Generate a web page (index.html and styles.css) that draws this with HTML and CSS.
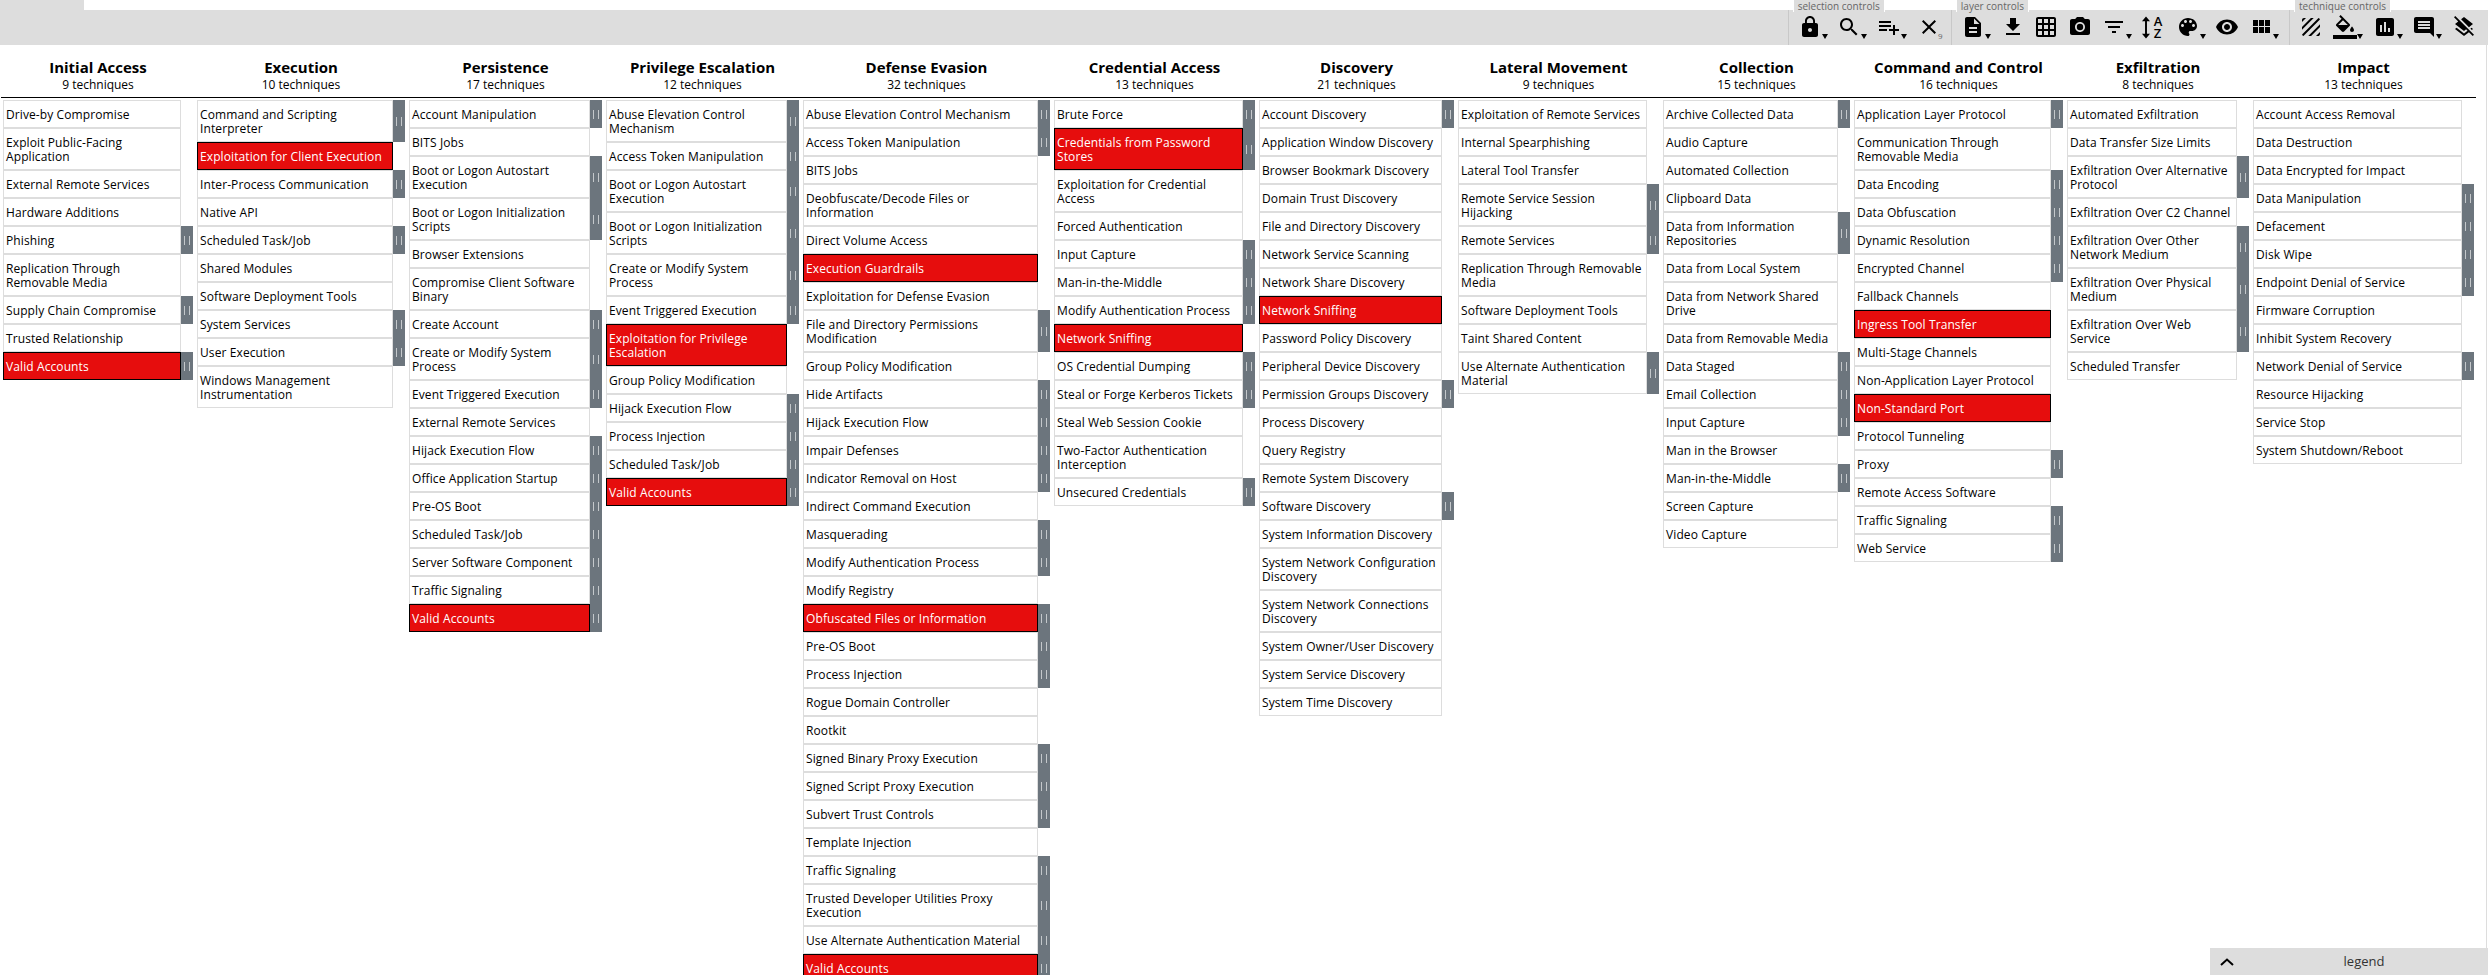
FILE: index.html
```html
<!DOCTYPE html>
<html lang="en">
<head>
<meta charset="utf-8">
<title>ATT&amp;CK Navigator</title>
<link rel="stylesheet" href="styles.css">
</head>
<body>
<header class="topbar">
  <div class="strip"><div class="strip-tab"></div></div>
  <div class="controls">
    <div class="group">
      <span class="group-label">selection controls</span>
      <div class="ctl dd"><svg viewBox="0 0 24 24"><path d="M18 8h-1V6c0-2.76-2.24-5-5-5S7 3.24 7 6v2H6c-1.1 0-2 .9-2 2v10c0 1.1.9 2 2 2h12c1.1 0 2-.9 2-2V10c0-1.1-.9-2-2-2zm-6 9c-1.1 0-2-.9-2-2s.9-2 2-2 2 .9 2 2-.9 2-2 2zm3.1-9H8.9V6c0-1.71 1.39-3.1 3.1-3.1 1.71 0 3.1 1.39 3.1 3.1v2z"/></svg></div>
      <div class="ctl dd"><svg viewBox="0 0 24 24"><path d="M15.5 14h-.79l-.28-.27C15.41 12.59 16 11.11 16 9.5 16 5.91 13.09 3 9.5 3S3 5.91 3 9.5 5.91 16 9.5 16c1.61 0 3.09-.59 4.23-1.57l.27.28v.79l5 4.99L20.49 19l-4.99-5zm-6 0C7.01 14 5 11.99 5 9.5S7.01 5 9.5 5 14 7.01 14 9.5 11.99 14 9.5 14z"/></svg></div>
      <div class="ctl dd"><svg viewBox="0 0 24 24"><path d="M14 10H2v2h12v-2zm0-4H2v2h12V6zm4 8v-4h-2v4h-4v2h4v4h2v-4h4v-2h-4zM2 16h8v-2H2v2z"/></svg></div>
      <div class="ctl"><svg viewBox="0 0 24 24"><path d="M19 6.41L17.59 5 12 10.59 6.41 5 5 6.41 10.59 12 5 17.59 6.41 19 12 13.41 17.59 19 19 17.59 13.41 12z"/></svg><span class="count">9</span></div>
    </div>
    <div class="group">
      <span class="group-label">layer controls</span>
      <div class="ctl dd"><svg viewBox="0 0 24 24"><path d="M14 2H6c-1.1 0-1.99.9-1.99 2L4 20c0 1.1.89 2 1.99 2H18c1.1 0 2-.9 2-2V8l-6-6zm2 16H8v-2h8v2zm0-4H8v-2h8v2zm-3-5V3.5L18.5 9H13z"/></svg></div>
      <div class="ctl"><svg viewBox="0 0 24 24"><path d="M19 9h-4V3H9v6H5l7 7 7-7zM5 18v2h14v-2H5z"/></svg></div>
      <div class="ctl"><svg viewBox="0 0 24 24"><path d="M20 2H4c-1.1 0-2 .9-2 2v16c0 1.1.9 2 2 2h16c1.1 0 2-.9 2-2V4c0-1.1-.9-2-2-2zM8 20H4v-4h4v4zm0-6H4v-4h4v4zm0-6H4V4h4v4zm6 12h-4v-4h4v4zm0-6h-4v-4h4v4zm0-6h-4V4h4v4zm6 12h-4v-4h4v4zm0-6h-4v-4h4v4zm0-6h-4V4h4v4z"/></svg></div>
      <div class="ctl"><svg viewBox="0 0 24 24"><circle cx="12" cy="12" r="3.2"/><path d="M9 2L7.17 4H4c-1.1 0-2 .9-2 2v12c0 1.1.9 2 2 2h16c1.1 0 2-.9 2-2V6c0-1.1-.9-2-2-2h-3.17L15 2H9zm3 15c-2.76 0-5-2.24-5-5s2.24-5 5-5 5 2.24 5 5-2.24 5-5 5z"/></svg></div>
      <div class="ctl dd"><svg viewBox="0 0 24 24"><path d="M10 18h4v-2h-4v2zM3 6v2h18V6H3zm3 7h12v-2H6v2z"/></svg></div>
      <div class="ctl sort"><svg class="sort-arrow" viewBox="0 0 10 24"><path d="M5 0.5L9.2 5.5H6V18.5H9.2L5 23.500L0.8 18.5H4V5.5H0.8z"/></svg><span class="az">A<br>Z</span></div>
      <div class="ctl dd"><svg viewBox="0 0 24 24"><path d="M12 3c-4.97 0-9 4.03-9 9s4.03 9 9 9c.83 0 1.5-.67 1.5-1.5 0-.39-.15-.74-.39-1.01-.23-.26-.38-.61-.38-.99 0-.83.67-1.5 1.5-1.5H16c2.76 0 5-2.24 5-5 0-4.42-4.03-8-9-8zm-5.500 9c-.83 0-1.5-.67-1.5-1.5S5.67 9 6.5 9 8 9.67 8 10.500 7.33 12 6.5 12zm3-4C8.67 8 8 7.33 8 6.5S8.67 5 9.5 5s1.5.67 1.5 1.5S10.33 8 9.5 8zm5 0c-.83 0-1.5-.67-1.5-1.5S13.67 5 14.5 5s1.5.67 1.5 1.5S15.33 8 14.5 8zm3 4c-.83 0-1.5-.67-1.5-1.5S16.67 9 17.5 9s1.5.67 1.5 1.5-.67 1.5-1.5 1.5z"/></svg></div>
      <div class="ctl"><svg viewBox="0 0 24 24"><path d="M12 4.5C7 4.5 2.730 7.610 1 12c1.730 4.390 6 7.500 11 7.500s9.270-3.110 11-7.500c-1.730-4.390-6-7.500-11-7.500zM12 17c-2.760 0-5-2.240-5-5s2.240-5 5-5 5 2.240 5 5-2.240 5-5 5zm0-8c-1.660 0-3 1.340-3 3s1.340 3 3 3 3-1.340 3-3-1.340-3-3-3z"/></svg></div>
      <div class="ctl dd"><svg viewBox="0 0 24 24"><path d="M4 11h5V5H4v6zm0 7h5v-6H4v6zm6 0h5v-6h-5v6zm6 0h5v-6h-5v6zm-6-7h5V5h-5v6zm6-6v6h5V5h-5z"/></svg></div>
    </div>
    <div class="group">
      <span class="group-label">technique controls</span>
      <div class="ctl"><svg viewBox="0 0 24 24"><path d="M19.51 3.080L3.080 19.510c.09.34.27.65.51.9.25.24.56.42.9.51L20.930 4.490c-.19-.69-.73-1.230-1.420-1.410zM11.880 3L3 11.880v2.830L14.710 3h-2.830zM5 3c-1.100 0-2 .9-2 2v2l4-4H5zm14 18c.55 0 1.050-.22 1.410-.59.37-.36.59-.86.59-1.410v-2l-4 4h2zm-9.710 0h2.830L21 12.120V9.290L9.290 21z"/></svg></div>
      <div class="ctl dd"><svg viewBox="0 0 24 24"><path d="M16.560 8.940L7.620 0 6.210 1.410l2.380 2.380-5.150 5.150c-.59.59-.59 1.540 0 2.120l5.500 5.500c.29.29.68.44 1.060.44s.77-.15 1.060-.44l5.500-5.500c.59-.58.59-1.530 0-2.120zM5.210 10L10 5.210 14.790 10H5.210zM19 11.500s-2 2.170-2 3.500c0 1.100.9 2 2 2s2-.9 2-2c0-1.330-2-3.500-2-3.500z"/><path d="M0 20h24v4H0z"/></svg></div>
      <div class="ctl dd"><svg viewBox="0 0 24 24"><path d="M19 3H5c-1.100 0-2 .9-2 2v14c0 1.100.9 2 2 2h14c1.100 0 2-.9 2-2V5c0-1.100-.9-2-2-2zM9 17H7v-7h2v7zm4 0h-2V7h2v10zm4 0h-2v-4h2v4z"/></svg></div>
      <div class="ctl dd"><svg viewBox="0 0 24 24"><path d="M21.990 4c0-1.100-.89-2-1.990-2H4c-1.100 0-2 .9-2 2v12c0 1.100.9 2 2 2h14l4 4-.01-18zM18 14H6v-2h12v2zm0-3H6V9h12v2zm0-3H6V6h12v2z"/></svg></div>
      <div class="ctl"><svg viewBox="0 0 24 24"><path d="M19.810 14.990l1.190-.92-1.430-1.430-1.190.92 1.430 1.430zm-.45-4.720L21 9l-9-7-2.910 2.270 7.870 7.880 2.400-1.880zM3.270 1L2 2.270l4.220 4.220L3 9l1.630 1.270L12 16l2.100-1.630 1.430 1.430L12 18.540l-7.370-5.730L3 14.070l9 7 4.950-3.850L20.730 21 22 19.730 3.270 1z"/></svg></div>
    </div>
  </div>
</header>

<main class="matrix">
  <div class="tactic first"><h2>Initial Access</h2><p>9 techniques</p></div>
  <div class="tactic"><h2>Execution</h2><p>10 techniques</p></div>
  <div class="tactic"><h2>Persistence</h2><p>17 techniques</p></div>
  <div class="tactic"><h2>Privilege Escalation</h2><p>12 techniques</p></div>
  <div class="tactic"><h2>Defense Evasion</h2><p>32 techniques</p></div>
  <div class="tactic"><h2>Credential Access</h2><p>13 techniques</p></div>
  <div class="tactic"><h2>Discovery</h2><p>21 techniques</p></div>
  <div class="tactic"><h2>Lateral Movement</h2><p>9 techniques</p></div>
  <div class="tactic"><h2>Collection</h2><p>15 techniques</p></div>
  <div class="tactic"><h2>Command and Control</h2><p>16 techniques</p></div>
  <div class="tactic"><h2>Exfiltration</h2><p>8 techniques</p></div>
  <div class="tactic last"><h2>Impact</h2><p>13 techniques</p></div>

  <ul class="list first">
    <li class="tech"><span class="name">Drive-by Compromise</span></li>
    <li class="tech"><span class="name">Exploit Public-Facing<br>Application</span></li>
    <li class="tech"><span class="name">External Remote Services</span></li>
    <li class="tech"><span class="name">Hardware Additions</span></li>
    <li class="tech"><span class="name">Phishing</span><i class="bar"></i></li>
    <li class="tech"><span class="name">Replication Through<br>Removable Media</span></li>
    <li class="tech"><span class="name">Supply Chain Compromise</span><i class="bar"></i></li>
    <li class="tech"><span class="name">Trusted Relationship</span></li>
    <li class="tech sel"><span class="name">Valid Accounts</span><i class="bar"></i></li>
  </ul>
  <ul class="list">
    <li class="tech"><span class="name">Command and Scripting<br>Interpreter</span><i class="bar"></i></li>
    <li class="tech sel"><span class="name">Exploitation for Client Execution</span></li>
    <li class="tech"><span class="name">Inter-Process Communication</span><i class="bar"></i></li>
    <li class="tech"><span class="name">Native API</span></li>
    <li class="tech"><span class="name">Scheduled Task/Job</span><i class="bar"></i></li>
    <li class="tech"><span class="name">Shared Modules</span></li>
    <li class="tech"><span class="name">Software Deployment Tools</span></li>
    <li class="tech"><span class="name">System Services</span><i class="bar"></i></li>
    <li class="tech"><span class="name">User Execution</span><i class="bar"></i></li>
    <li class="tech"><span class="name">Windows Management<br>Instrumentation</span></li>
  </ul>
  <ul class="list">
    <li class="tech"><span class="name">Account Manipulation</span><i class="bar"></i></li>
    <li class="tech"><span class="name">BITS Jobs</span></li>
    <li class="tech"><span class="name">Boot or Logon Autostart<br>Execution</span><i class="bar"></i></li>
    <li class="tech"><span class="name">Boot or Logon Initialization<br>Scripts</span><i class="bar"></i></li>
    <li class="tech"><span class="name">Browser Extensions</span></li>
    <li class="tech"><span class="name">Compromise Client Software<br>Binary</span></li>
    <li class="tech"><span class="name">Create Account</span><i class="bar"></i></li>
    <li class="tech"><span class="name">Create or Modify System<br>Process</span><i class="bar"></i></li>
    <li class="tech"><span class="name">Event Triggered Execution</span><i class="bar"></i></li>
    <li class="tech"><span class="name">External Remote Services</span></li>
    <li class="tech"><span class="name">Hijack Execution Flow</span><i class="bar"></i></li>
    <li class="tech"><span class="name">Office Application Startup</span><i class="bar"></i></li>
    <li class="tech"><span class="name">Pre-OS Boot</span><i class="bar"></i></li>
    <li class="tech"><span class="name">Scheduled Task/Job</span><i class="bar"></i></li>
    <li class="tech"><span class="name">Server Software Component</span><i class="bar"></i></li>
    <li class="tech"><span class="name">Traffic Signaling</span><i class="bar"></i></li>
    <li class="tech sel"><span class="name">Valid Accounts</span><i class="bar"></i></li>
  </ul>
  <ul class="list">
    <li class="tech"><span class="name">Abuse Elevation Control<br>Mechanism</span><i class="bar"></i></li>
    <li class="tech"><span class="name">Access Token Manipulation</span><i class="bar"></i></li>
    <li class="tech"><span class="name">Boot or Logon Autostart<br>Execution</span><i class="bar"></i></li>
    <li class="tech"><span class="name">Boot or Logon Initialization<br>Scripts</span><i class="bar"></i></li>
    <li class="tech"><span class="name">Create or Modify System<br>Process</span><i class="bar"></i></li>
    <li class="tech"><span class="name">Event Triggered Execution</span><i class="bar"></i></li>
    <li class="tech sel"><span class="name">Exploitation for Privilege<br>Escalation</span></li>
    <li class="tech"><span class="name">Group Policy Modification</span></li>
    <li class="tech"><span class="name">Hijack Execution Flow</span><i class="bar"></i></li>
    <li class="tech"><span class="name">Process Injection</span><i class="bar"></i></li>
    <li class="tech"><span class="name">Scheduled Task/Job</span><i class="bar"></i></li>
    <li class="tech sel"><span class="name">Valid Accounts</span><i class="bar"></i></li>
  </ul>
  <ul class="list">
    <li class="tech"><span class="name">Abuse Elevation Control Mechanism</span><i class="bar"></i></li>
    <li class="tech"><span class="name">Access Token Manipulation</span><i class="bar"></i></li>
    <li class="tech"><span class="name">BITS Jobs</span></li>
    <li class="tech"><span class="name">Deobfuscate/Decode Files or<br>Information</span></li>
    <li class="tech"><span class="name">Direct Volume Access</span></li>
    <li class="tech sel"><span class="name">Execution Guardrails</span></li>
    <li class="tech"><span class="name">Exploitation for Defense Evasion</span></li>
    <li class="tech"><span class="name">File and Directory Permissions<br>Modification</span><i class="bar"></i></li>
    <li class="tech"><span class="name">Group Policy Modification</span></li>
    <li class="tech"><span class="name">Hide Artifacts</span><i class="bar"></i></li>
    <li class="tech"><span class="name">Hijack Execution Flow</span><i class="bar"></i></li>
    <li class="tech"><span class="name">Impair Defenses</span><i class="bar"></i></li>
    <li class="tech"><span class="name">Indicator Removal on Host</span><i class="bar"></i></li>
    <li class="tech"><span class="name">Indirect Command Execution</span></li>
    <li class="tech"><span class="name">Masquerading</span><i class="bar"></i></li>
    <li class="tech"><span class="name">Modify Authentication Process</span><i class="bar"></i></li>
    <li class="tech"><span class="name">Modify Registry</span></li>
    <li class="tech sel"><span class="name">Obfuscated Files or Information</span><i class="bar"></i></li>
    <li class="tech"><span class="name">Pre-OS Boot</span><i class="bar"></i></li>
    <li class="tech"><span class="name">Process Injection</span><i class="bar"></i></li>
    <li class="tech"><span class="name">Rogue Domain Controller</span></li>
    <li class="tech"><span class="name">Rootkit</span></li>
    <li class="tech"><span class="name">Signed Binary Proxy Execution</span><i class="bar"></i></li>
    <li class="tech"><span class="name">Signed Script Proxy Execution</span><i class="bar"></i></li>
    <li class="tech"><span class="name">Subvert Trust Controls</span><i class="bar"></i></li>
    <li class="tech"><span class="name">Template Injection</span></li>
    <li class="tech"><span class="name">Traffic Signaling</span><i class="bar"></i></li>
    <li class="tech"><span class="name">Trusted Developer Utilities Proxy<br>Execution</span><i class="bar"></i></li>
    <li class="tech"><span class="name">Use Alternate Authentication Material</span><i class="bar"></i></li>
    <li class="tech sel"><span class="name">Valid Accounts</span><i class="bar"></i></li>
  </ul>
  <ul class="list">
    <li class="tech"><span class="name">Brute Force</span><i class="bar"></i></li>
    <li class="tech sel"><span class="name">Credentials from Password<br>Stores</span><i class="bar"></i></li>
    <li class="tech"><span class="name">Exploitation for Credential<br>Access</span></li>
    <li class="tech"><span class="name">Forced Authentication</span></li>
    <li class="tech"><span class="name">Input Capture</span><i class="bar"></i></li>
    <li class="tech"><span class="name">Man-in-the-Middle</span><i class="bar"></i></li>
    <li class="tech"><span class="name">Modify Authentication Process</span><i class="bar"></i></li>
    <li class="tech sel"><span class="name">Network Sniffing</span></li>
    <li class="tech"><span class="name">OS Credential Dumping</span><i class="bar"></i></li>
    <li class="tech"><span class="name">Steal or Forge Kerberos Tickets</span><i class="bar"></i></li>
    <li class="tech"><span class="name">Steal Web Session Cookie</span></li>
    <li class="tech"><span class="name">Two-Factor Authentication<br>Interception</span></li>
    <li class="tech"><span class="name">Unsecured Credentials</span><i class="bar"></i></li>
  </ul>
  <ul class="list">
    <li class="tech"><span class="name">Account Discovery</span><i class="bar"></i></li>
    <li class="tech"><span class="name">Application Window Discovery</span></li>
    <li class="tech"><span class="name">Browser Bookmark Discovery</span></li>
    <li class="tech"><span class="name">Domain Trust Discovery</span></li>
    <li class="tech"><span class="name">File and Directory Discovery</span></li>
    <li class="tech"><span class="name">Network Service Scanning</span></li>
    <li class="tech"><span class="name">Network Share Discovery</span></li>
    <li class="tech sel"><span class="name">Network Sniffing</span></li>
    <li class="tech"><span class="name">Password Policy Discovery</span></li>
    <li class="tech"><span class="name">Peripheral Device Discovery</span></li>
    <li class="tech"><span class="name">Permission Groups Discovery</span><i class="bar"></i></li>
    <li class="tech"><span class="name">Process Discovery</span></li>
    <li class="tech"><span class="name">Query Registry</span></li>
    <li class="tech"><span class="name">Remote System Discovery</span></li>
    <li class="tech"><span class="name">Software Discovery</span><i class="bar"></i></li>
    <li class="tech"><span class="name">System Information Discovery</span></li>
    <li class="tech"><span class="name">System Network Configuration<br>Discovery</span></li>
    <li class="tech"><span class="name">System Network Connections<br>Discovery</span></li>
    <li class="tech"><span class="name">System Owner/User Discovery</span></li>
    <li class="tech"><span class="name">System Service Discovery</span></li>
    <li class="tech"><span class="name">System Time Discovery</span></li>
  </ul>
  <ul class="list">
    <li class="tech"><span class="name">Exploitation of Remote Services</span></li>
    <li class="tech"><span class="name">Internal Spearphishing</span></li>
    <li class="tech"><span class="name">Lateral Tool Transfer</span></li>
    <li class="tech"><span class="name">Remote Service Session<br>Hijacking</span><i class="bar"></i></li>
    <li class="tech"><span class="name">Remote Services</span><i class="bar"></i></li>
    <li class="tech"><span class="name">Replication Through Removable<br>Media</span></li>
    <li class="tech"><span class="name">Software Deployment Tools</span></li>
    <li class="tech"><span class="name">Taint Shared Content</span></li>
    <li class="tech"><span class="name">Use Alternate Authentication<br>Material</span><i class="bar"></i></li>
  </ul>
  <ul class="list">
    <li class="tech"><span class="name">Archive Collected Data</span><i class="bar"></i></li>
    <li class="tech"><span class="name">Audio Capture</span></li>
    <li class="tech"><span class="name">Automated Collection</span></li>
    <li class="tech"><span class="name">Clipboard Data</span></li>
    <li class="tech"><span class="name">Data from Information<br>Repositories</span><i class="bar"></i></li>
    <li class="tech"><span class="name">Data from Local System</span></li>
    <li class="tech"><span class="name">Data from Network Shared<br>Drive</span></li>
    <li class="tech"><span class="name">Data from Removable Media</span></li>
    <li class="tech"><span class="name">Data Staged</span><i class="bar"></i></li>
    <li class="tech"><span class="name">Email Collection</span><i class="bar"></i></li>
    <li class="tech"><span class="name">Input Capture</span><i class="bar"></i></li>
    <li class="tech"><span class="name">Man in the Browser</span></li>
    <li class="tech"><span class="name">Man-in-the-Middle</span><i class="bar"></i></li>
    <li class="tech"><span class="name">Screen Capture</span></li>
    <li class="tech"><span class="name">Video Capture</span></li>
  </ul>
  <ul class="list">
    <li class="tech"><span class="name">Application Layer Protocol</span><i class="bar"></i></li>
    <li class="tech"><span class="name">Communication Through<br>Removable Media</span></li>
    <li class="tech"><span class="name">Data Encoding</span><i class="bar"></i></li>
    <li class="tech"><span class="name">Data Obfuscation</span><i class="bar"></i></li>
    <li class="tech"><span class="name">Dynamic Resolution</span><i class="bar"></i></li>
    <li class="tech"><span class="name">Encrypted Channel</span><i class="bar"></i></li>
    <li class="tech"><span class="name">Fallback Channels</span></li>
    <li class="tech sel"><span class="name">Ingress Tool Transfer</span></li>
    <li class="tech"><span class="name">Multi-Stage Channels</span></li>
    <li class="tech"><span class="name">Non-Application Layer Protocol</span></li>
    <li class="tech sel"><span class="name">Non-Standard Port</span></li>
    <li class="tech"><span class="name">Protocol Tunneling</span></li>
    <li class="tech"><span class="name">Proxy</span><i class="bar"></i></li>
    <li class="tech"><span class="name">Remote Access Software</span></li>
    <li class="tech"><span class="name">Traffic Signaling</span><i class="bar"></i></li>
    <li class="tech"><span class="name">Web Service</span><i class="bar"></i></li>
  </ul>
  <ul class="list">
    <li class="tech"><span class="name">Automated Exfiltration</span></li>
    <li class="tech"><span class="name">Data Transfer Size Limits</span></li>
    <li class="tech"><span class="name">Exfiltration Over Alternative<br>Protocol</span><i class="bar"></i></li>
    <li class="tech"><span class="name">Exfiltration Over C2 Channel</span></li>
    <li class="tech"><span class="name">Exfiltration Over Other<br>Network Medium</span><i class="bar"></i></li>
    <li class="tech"><span class="name">Exfiltration Over Physical<br>Medium</span><i class="bar"></i></li>
    <li class="tech"><span class="name">Exfiltration Over Web<br>Service</span><i class="bar"></i></li>
    <li class="tech"><span class="name">Scheduled Transfer</span></li>
  </ul>
  <ul class="list last">
    <li class="tech"><span class="name">Account Access Removal</span></li>
    <li class="tech"><span class="name">Data Destruction</span></li>
    <li class="tech"><span class="name">Data Encrypted for Impact</span></li>
    <li class="tech"><span class="name">Data Manipulation</span><i class="bar"></i></li>
    <li class="tech"><span class="name">Defacement</span><i class="bar"></i></li>
    <li class="tech"><span class="name">Disk Wipe</span><i class="bar"></i></li>
    <li class="tech"><span class="name">Endpoint Denial of Service</span><i class="bar"></i></li>
    <li class="tech"><span class="name">Firmware Corruption</span></li>
    <li class="tech"><span class="name">Inhibit System Recovery</span></li>
    <li class="tech"><span class="name">Network Denial of Service</span><i class="bar"></i></li>
    <li class="tech"><span class="name">Resource Hijacking</span></li>
    <li class="tech"><span class="name">Service Stop</span></li>
    <li class="tech"><span class="name">System Shutdown/Reboot</span></li>
  </ul>
</main>

<aside class="legend">
  <svg class="chevron" viewBox="0 0 14 8"><path d="M1 7L7 1.500L13 7"/></svg>
  <span class="legend-text">legend</span>
</aside>
</body>
</html>
```

FILE: styles.css
```css
* { box-sizing: border-box; }

html, body {
  margin: 0;
  height: 100%;
  overflow: hidden;
  background: #fff;
  color: #000;
  font-family: "Open Sans", "Noto Sans", sans-serif;
  font-size: 12px;
}

/* Top bar */
.topbar { width: 100%; }
.strip { height: 10px; }
.strip-tab { width: 84px; height: 10px; background: #ddd; }

.controls {
  height: 35px;
  background: #ddd;
  display: flex;
  justify-content: flex-end;
  padding-right: 7px;
}

.group {
  position: relative;
  display: flex;
  border-left: 1px solid #c8c8c8;
  padding: 0 5px 0 4px;
}
.group:last-child { padding-right: 0; }

.group-label {
  position: absolute;
  top: -10px;
  left: 4px;
  height: 12px;
  padding: 0 4px;
  background: #ddd;
  border-left: 1px solid #fff;
  border-right: 1px solid #fff;
  color: #666;
  font-size: 10px;
  line-height: 12px;
  white-space: nowrap;
}

.ctl {
  position: relative;
  width: 33.8px;
  padding: 5px 0 0 5px;
}
.ctl.dd { width: 39.8px; }
.ctl svg { display: block; width: 24px; height: 24px; fill: #000; }

.ctl.dd::after {
  content: "";
  position: absolute;
  left: 29px;
  top: 24px;
  border-left: 3px solid transparent;
  border-right: 3px solid transparent;
  border-top: 5px solid #000;
}

.count {
  position: absolute;
  left: 26px;
  top: 21px;
  font-size: 8px;
  line-height: 10px;
  color: #666;
}

.ctl.sort { display: flex; padding: 6px 0 0 4px; }
.ctl .sort-arrow { width: 10px; height: 23px; }
.az {
  margin-left: 3px;
  font-size: 13px;
  line-height: 11.5px;
  font-weight: 600;
  color: #000;
}

/* Matrix */
.matrix {
  display: grid;
  grid-template-columns: 196px 212px 197px 197px 251px 205px 199px 205px 191px 213px 186px 223px;
  grid-template-rows: 53px auto;
  width: 2487px;
  height: 930px;
  padding-left: 1px;
  border-right: 1px solid #ddd;
  overflow: hidden;
}

.tactic {
  border-bottom: 1px solid #000;
  padding: 13px 4px 0 0;
  text-align: center;
}
.tactic.first { padding-left: 2px; }
.tactic.last { padding-right: 2px; }
.tactic h2 {
  margin: 0;
  font-size: 15px;
  line-height: 19px;
  font-weight: 700;
}
.tactic p {
  margin: 0;
  font-size: 12px;
  line-height: 16px;
}

.list {
  list-style: none;
  margin: 0;
  padding: 2px 4px 0 0;
}
.list.first { padding-left: 2px; }
.list.last { padding-right: 2px; }

.tech {
  display: grid;
  grid-template-columns: 1fr 12px;
}
.name {
  grid-column: 1;
  border: 1px solid #ddd;
  padding: 7px 2px 5px;
  line-height: 14px;
  letter-spacing: 0.1px;
  white-space: nowrap;
}
.sel .name {
  background: #e60d0d;
  border-color: #000;
  color: #fff;
}
.bar {
  grid-column: 2;
  background: #6c757d;
  display: flex;
  align-items: center;
  justify-content: center;
}
.bar::before {
  content: "";
  width: 4px;
  height: 9px;
  border-left: 1px solid #c4c8cb;
  border-right: 1px solid #c4c8cb;
}

/* Legend */
.legend {
  position: fixed;
  right: 0;
  bottom: 0;
  width: 278px;
  height: 27px;
  background: #ddd;
  display: flex;
  align-items: center;
  justify-content: center;
  color: #333;
  font-size: 13px;
}
.chevron {
  position: absolute;
  left: 10px;
  top: 10px;
  width: 14px;
  height: 8px;
  fill: none;
  stroke: #000;
  stroke-width: 2;
}
.legend-text { margin: -2px 0 0 30px; }
```
